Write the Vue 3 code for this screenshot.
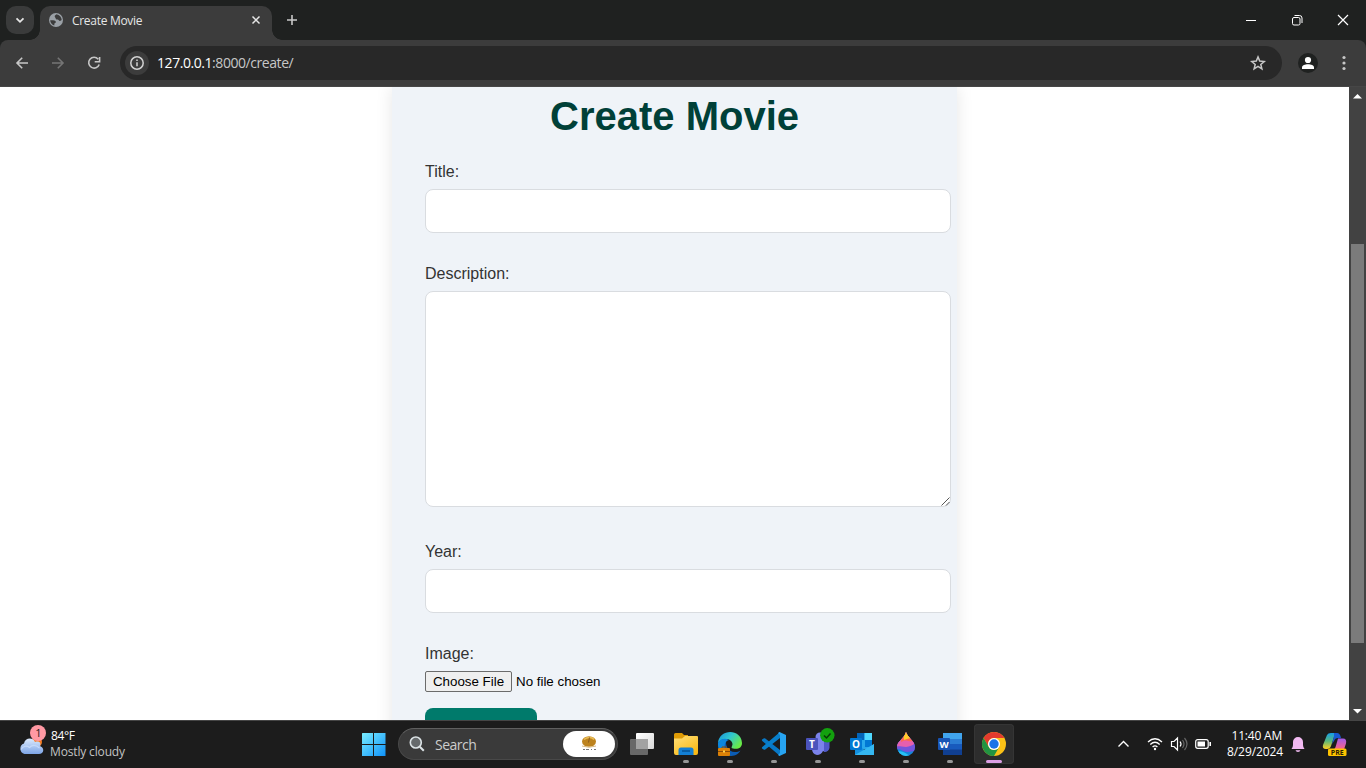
<script setup>
const apps = ['tasks', 'files', 'edge', 'code', 'teams', 'outlook', 'paint', 'word', 'chrome']
</script>

<template>
  <div class="desktop">
    <header class="tabs">
      <div class="tab-menu"><svg width="28" height="28"><path d="M10.500 12.300l3.500 3.500 3.500-3.500" fill="none" stroke="#e6e6e6" stroke-width="1.800"/></svg></div>
      <div class="tab">
        <svg class="globe" width="16" height="16" viewBox="0 0 16 16"><circle cx="8" cy="8" r="7" fill="#9aa0a6"/><path d="M2.2 8.2c2 .2 4-.2 5.2.9 1 1 .2 2-.8 2.2-.5 1 0 1.700-.4 2.100C4 12.600 2.200 10.600 2.200 8.200zM8.500 2.200c-.7 1-2 1-1.800 2.200.2 1 .9 1 1 2 .3 1.200 1.600.8 2.300 1.200.8.500 1 1.400 2 1.300.7 0 1.300-.5 1.700-.9-.1-3-2.200-5.300-5.200-5.800z" fill="#3c3c3c"/></svg>
        <span class="tab-title">Create Movie</span>
        <svg class="tab-close" width="10" height="10"><path d="M1.500 1.500l7 7M8.500 1.500l-7 7" stroke="#e6e6e6" stroke-width="1.500"/></svg>
      </div>
      <svg class="new-tab" width="12" height="12"><path d="M6 1v10M1 6h10" stroke="#c9c9c9" stroke-width="1.600"/></svg>
      <div class="window-controls">
        <svg width="46" height="40"><path d="M18 20.500h10" stroke="#fff"/></svg>
        <svg width="46" height="40" fill="none" stroke="#fff"><rect x="18.500" y="17.500" width="7.500" height="7.500" rx="1.500"/><path d="M20.500 15.500h5q2.500 0 2.500 2.500v5"/></svg>
        <svg width="46" height="40"><path d="M18 15l10 10M28 15l-10 10" stroke="#fff" stroke-width="1.200"/></svg>
      </div>
    </header>

    <div class="toolbar-back">
      <nav class="toolbar">
        <svg class="nav-icons" width="120" height="46" fill="none" stroke="#c7c7c7" stroke-width="1.600">
          <path d="M28 23H17M22.200 17.800L17 23l5.200 5.200"/>
          <path d="M52 23h11M57.800 17.800L63 23l-5.200 5.200" stroke="#757575"/>
          <path d="M98.200 19.200A5.400 5.400 0 1 0 99.200 24.500M99.600 17v4.800h-4.900"/>
        </svg>
        <div class="omnibox">
          <div class="info"><svg width="24" height="24" fill="none" stroke="#d2d2d2" stroke-width="1.500"><circle cx="12" cy="12" r="6.200"/><path d="M12 11.300v4M12 8.500v1.500"/></svg></div>
          <span class="url"><b>127.0.0.1</b>:8000/create/</span>
          <svg class="star" width="16" height="16" viewBox="0 0 16 16"><path d="M8 1.900l1.700 4.200 4.500.4-3.400 2.900 1.100 4.400L8 11.400l-3.900 2.400 1.100-4.400-3.400-2.900 4.500-.4z" fill="none" stroke="#c7c7c7" stroke-width="1.500"/></svg>
        </div>
        <svg class="profile" width="20" height="20"><circle cx="10" cy="10" r="10" fill="#1f2120"/><circle cx="10" cy="7" r="3.100" fill="#fff"/><path d="M4 16v-1.500c0-2.300 3-3.300 6-3.300s6 1 6 3.300V16z" fill="#fff"/></svg>
        <svg class="dots" width="4" height="16" fill="#c7c7c7"><circle cx="2" cy="2.500" r="1.600"/><circle cx="2" cy="8" r="1.600"/><circle cx="2" cy="13.500" r="1.600"/></svg>
      </nav>
    </div>

    <main class="viewport">
      <div class="page">
        <form class="card">
          <h1>Create Movie</h1>
          <label>Title:</label>
          <div class="field"></div>
          <label>Description:</label>
          <div class="field area"><svg width="9" height="9"><path d="M.5 8.500l8-8M5 8.500l3.500-3.500" stroke="#555" stroke-width="1"/></svg></div>
          <label>Year:</label>
          <div class="field"></div>
          <label class="image-label">Image:</label>
          <div class="file"><span class="choose">Choose File</span><span>No file chosen</span></div>
          <div class="submit"></div>
        </form>
      </div>
      <aside class="scrollbar">
        <svg width="17" height="17"><path d="M4 11.500L8.500 7l4.500 4.500z" fill="#fff"/></svg>
        <div class="thumb"></div>
        <svg width="17" height="17"><path d="M4 6l4.500 4.500L13 6z" fill="#fff"/></svg>
      </aside>
    </main>

    <footer class="taskbar">
      <div class="weather">
        <svg width="32" height="34" viewBox="0 0 32 34">
          <defs><linearGradient id="cloud" x2="0" y2="1"><stop stop-color="#dceafd"/><stop offset="1" stop-color="#7da5e6"/></linearGradient></defs>
          <circle cx="19" cy="17" r="5" fill="#f47b20"/>
          <path d="M6.500 29a5.500 5.500 0 0 1-.5-10.500C7 12.500 15 12 17 17c5-1.500 6 1.500 5 4 5 2 4 8-1 8z" fill="url(#cloud)"/>
          <path d="M3 24.500c2-4 6-4 8.500-2 3-3 7-2 10 .5" fill="none" stroke="#c5dafa" stroke-width="1.200"/>
          <circle cx="20" cy="8" r="8" fill="#ff99a4"/><text x="20.500" y="12" text-anchor="middle" font-size="11" fill="#1b1b1b">1</text>
        </svg>
        <div class="weather-text"><span class="temp">84°F</span><span class="sky">Mostly cloudy</span></div>
      </div>
      <svg class="start" width="24" height="24"><defs><linearGradient id="win" gradientUnits="userSpaceOnUse" x1="0" y1="0" x2="24" y2="24"><stop stop-color="#79edff"/><stop offset="1" stop-color="#0b8ffa"/></linearGradient></defs><path d="M.5 0H11v11H0V.5zM12 0h11.500v11H12zM0 12h11v11H0zM12 12h11.500v11H12z" fill="url(#win)"/></svg>
      <div class="search">
        <svg width="16" height="16"><circle cx="6.800" cy="6.500" r="5.500" fill="#666a6c" stroke="#dce3e6" stroke-width="1.600"/><path d="M10.800 10.800l4 4" stroke="#dce3e6" stroke-width="2"/></svg>
        <span>Search</span>
        <div class="doodle"><svg width="52" height="26"><ellipse cx="26" cy="10.500" rx="7" ry="5.300" fill="#bd831e"/><path d="M21 8.500c3-2.500 8-3 10 0" fill="none" stroke="#e9bc55" stroke-width="1.600"/><path d="M25.500 11.500l1-5" stroke="#8a5a1c"/><path d="M19 15q7 2.500 14 0" stroke="#d9ba82" fill="none"/><path d="M20 18.500h2M23 18.500h3M28 18.500h1M31 18.500h2" stroke="#777"/></svg></div>
      </div>

      <div class="apps">
        <div v-for="a in apps" :key="a" class="app" :class="{ active: a === 'chrome', running: a !== 'tasks' }">
          <svg v-if="a === 'tasks'" width="28" height="28" viewBox="0 0 28 28"><defs><linearGradient id="tv" x2="1" y2="1"><stop stop-color="#fff"/><stop offset="1" stop-color="#d8d8d8"/></linearGradient></defs><rect x="8" y="3" width="18" height="16" rx="1" fill="url(#tv)"/><rect x="2" y="9" width="18" height="16" rx="1" fill="#686868"/><path d="M8 9h12v10H8z" fill="#a2a2a2"/></svg>
          <svg v-else-if="a === 'files'" width="28" height="28" viewBox="0 0 28 28"><defs><linearGradient id="fo" x2=".7" y2="1"><stop stop-color="#ffe07a"/><stop offset="1" stop-color="#f9b916"/></linearGradient></defs><path d="M2 4.500Q2 3 3.500 3H10l2 2h4v4H2z" fill="#df9b05"/><path d="M2 8.500h8L13 6h12q1 0 1 1v16q0 2-2 2H4q-2 0-2-2z" fill="url(#fo)"/><path d="M6.500 25v-5q0-2.500 2.500-2.500h10q2.500 0 2.500 2.500v5z" fill="#137fd4"/><path d="M10 21h8" stroke="#075598" stroke-width="1.600"/></svg>
          <svg v-else-if="a === 'edge'" width="28" height="28" viewBox="0 0 28 28"><defs><linearGradient id="ed" x2="1" y2=".6"><stop stop-color="#168fd8"/><stop offset=".5" stop-color="#31c7ce"/><stop offset="1" stop-color="#69eb46"/></linearGradient></defs><path d="M2 14C2 9 7 8 11 9c-3 5 1 13 8 13 2 0 4-.5 5.500-1.500C22 25 18 26 14 26 7 26 2 21 2 14z" fill="#0b5cb5"/><path d="M2 13C3-1 25-2 26 13c0 5-4 6.500-9 5.500-2.500-.5-1-1.500-.5-4 0-3.500-3-5.500-7-5.500-4 0-6 2-7.500 4z" fill="url(#ed)"/><path d="M2 13c2-4 7-5.500 11-3-4 1-5 5-4 10l-5 1c-2-3-2-5-2-8z" fill="#0c86dc"/><rect x="2" y="18" width="12" height="8" rx="1" fill="#dc8106"/><path d="M6 18v-1h4v1M2 21.500h12" fill="none" stroke="#894b08"/><rect x="7" y="20.500" width="2" height="2" fill="#ffd34e"/></svg>
          <svg v-else-if="a === 'code'" width="28" height="28" viewBox="0 0 28 28"><path d="M2 9.500l2-1.200q.7-.3 1.300.2L20 20v6L2.300 11q-.7-.8-.3-1.500z" fill="#0878c6"/><path d="M2 18.500l2 1.200q.7.300 1.300-.2L20 8V2L2.300 17q-.7.800-.3 1.500z" fill="#087fcb"/><path d="M19.500 2L26 5v18l-6.500 3-1.500-1 2-2V5l-2-2z" fill="#27a4f1"/></svg>
          <svg v-else-if="a === 'teams'" width="28" height="28" viewBox="0 0 28 28"><circle cx="16" cy="7" r="4.500" fill="#7b83eb"/><path d="M10 11h15v7q-2 5-6 3-2 4-6 4-5-1-5-6z" fill="#7b83eb"/><path d="M20 11h5.500v7q-1 4-5.500 4z" fill="#5059c9"/><rect x="2" y="8" width="12" height="12" rx="1" fill="#4b53bc"/><text x="8" y="17.500" text-anchor="middle" font-size="10" font-weight="700" fill="#fff">T</text><circle cx="23.300" cy="5.300" r="7.200" fill="#13a10e"/><path d="M20 5.500l2.500 2.500 4-4.500" fill="none" stroke="#073a06" stroke-width="1.500"/></svg>
          <svg v-else-if="a === 'outlook'" width="28" height="28" viewBox="0 0 28 28"><path d="M9 3h15v16H9z" fill="#28a8ea"/><path d="M9 3h7v7H9z" fill="#0364b8"/><path d="M17 10h7v7h-7z" fill="#0078d4"/><path d="M17 3h7v7h-7z" fill="#50d9ff"/><path d="M7 14l10 6 9-6v11H7z" fill="#1490df"/><path d="M7 25l19-11v11z" fill="#35b8f1"/><rect x="2" y="8" width="12" height="12" rx="1" fill="#0078d4"/><text x="8" y="17.500" text-anchor="middle" font-size="10" font-weight="700" fill="#fff">O</text></svg>
          <svg v-else-if="a === 'paint'" width="28" height="28" viewBox="0 0 28 28"><defs><clipPath id="drop"><path d="M14 2c1 5 9 9 9 15a9 9 0 0 1-18 0C5 11 12 9 14 2z"/></clipPath></defs><g clip-path="url(#drop)"><path d="M0 0h28v28H0z" fill="#1686dc"/><path d="M0 0h28v22c-6-3-11 2-17-1-5-3-6-1-11-1z" fill="#7554dc"/><path d="M0 0h28v12c-5 0-8 5-14 5-5 0-9-2-14 1z" fill="#e65fae"/><path d="M10 0h15v13c-5-3-5-1-9-2-3-1-5 0-7 1z" fill="#ff674f"/><path d="M11 0h9v8q-3 0-8 2z" fill="#ffcd29"/><path d="M5 21q6 0 10 3t8 0v4H5z" fill="#27c2f5"/></g></svg>
          <svg v-else-if="a === 'word'" width="28" height="28" viewBox="0 0 28 28"><path d="M7 3h19v22H7z" fill="#185abd"/><path d="M7 3h19v6H7z" fill="#41a5ee"/><path d="M7 9h19v5H7z" fill="#2b7cd3"/><path d="M7 19.500h19V25H7z" fill="#103f91"/><rect x="2" y="8" width="12" height="12" rx="1" fill="#1855b5"/><text x="8" y="17.500" text-anchor="middle" font-size="9.500" font-weight="700" fill="#fff">W</text></svg>
          <svg v-else width="28" height="28" viewBox="0 0 28 28"><circle cx="14" cy="14" r="12" fill="#fbc116"/><path d="M3.600 8A12 12 0 0 1 24.400 8H14a6 6 0 0 0-5.200 9z" fill="#e33b2e"/><path d="M3.600 8A12 12 0 0 0 14 26l5.200-9A6 6 0 0 1 8.800 17z" fill="#229342"/><circle cx="14" cy="14" r="6" fill="#fff"/><circle cx="14" cy="14" r="4.700" fill="#1a73e8"/></svg>
        </div>
      </div>

      <div class="tray">
        <svg class="status" width="100" height="24" fill="none" stroke="#fff" stroke-width="1.400">
          <path d="M2.500 14.500L7.500 9.500l5 5"/>
          <path d="M32 10q7-6.500 14 0M34.300 12.500q4.700-4.500 9.400 0M36.600 15q2.400-2.300 4.800 0" stroke-width="1.300"/><circle cx="39" cy="17" r="1.200" fill="#fff" stroke="none"/>
          <path d="M55.500 9.500H58l3.500-3.500v12L58 14.500h-2.500zM64 9.500q2 2.500 0 5" stroke-width="1.200"/><path d="M66.500 8q3 4 0 8M68.500 6q5 6 0 12" stroke="#666" stroke-width="1.200"/>
          <rect x="79.700" y="7.700" width="12.500" height="8.600" rx="2" stroke-width="1.200"/><path d="M81.500 9.500h7.500v5h-7.500z" fill="#fff" stroke="none"/><path d="M94.200 10v4" stroke-width="1.600"/>
        </svg>
        <div class="clock"><span class="time">11:40 AM</span><span class="date">8/29/2024</span></div>
        <svg class="bell" width="14" height="17" fill="#f2baf2"><path d="M.5 13q1.500-2 1.500-4V6a5 5 0 0 1 10 0v3q0 2 1.500 4zM4.500 14.300h5q-.5 1.700-2.500 1.700t-2.500-1.700z"/></svg>
        <svg class="copilot" width="26" height="26" viewBox="0 0 26 26"><defs><linearGradient id="cl" x2="0" y2="1"><stop stop-color="#159ee9"/><stop offset=".5" stop-color="#58b77b"/><stop offset="1" stop-color="#ffd020"/></linearGradient><linearGradient id="cr" x2="0" y2="1"><stop stop-color="#a15bea"/><stop offset="1" stop-color="#ff6480"/></linearGradient></defs><path d="M5 3q1-2 4-2h6q-2 0-3 4l-3 9q-1 3-4 3H4q-4 0-3-4z" fill="url(#cl)"/><path d="M12 1h3q3 0 4 5h-3q-3 0-4 3l-2 3 2-8z" fill="#1859d3"/><path d="M16 6.500h5q4 0 3 5l-2 6H11q2 0 3-4z" fill="url(#cr)"/><rect x="6" y="16.500" width="18.500" height="7.500" rx="1.500" fill="#ffc400"/><text x="15.300" y="23" text-anchor="middle" font-size="7" font-weight="700" fill="#2b2100">PRE</text></svg>
      </div>
    </footer>
  </div>
</template>

<style>
body { margin: 0; overflow: hidden; }
</style>

<style scoped>
* { box-sizing: border-box; }
svg { display: block; flex: none; overflow: visible; }
.desktop { width: 1366px; height: 768px; display: flex; flex-direction: column; overflow: hidden; background: #fff; font-family: "Open Sans", "Noto Sans", sans-serif; }
.tabs { height: 40px; flex: none; display: flex; background: #1f2120; }
.tab-menu { width: 28px; height: 28px; margin: 6px 6px 0; border-radius: 10px; background: #3a3b3b; }
.tab { position: relative; width: 232px; height: 34px; margin-top: 6px; padding: 0 11px 6px 8px; display: flex; align-items: center; background: #3c3c3c; border-radius: 10px 10px 0 0; color: #e6e6e6; font-size: 12px; }
.tab::before, .tab::after { content: ""; position: absolute; bottom: 0; width: 10px; height: 10px; }
.tab::before { left: -10px; background: radial-gradient(circle at 0 0, transparent 9.500px, #3c3c3c 10px); }
.tab::after { right: -10px; background: radial-gradient(circle at 100% 0, transparent 9.500px, #3c3c3c 10px); }
.tab-title { margin-left: 8px; letter-spacing: -.3px; white-space: nowrap; }
.tab-close { margin-left: auto; }
.new-tab { margin: 14px 0 0 14px; }
.window-controls { margin-left: auto; display: flex; }
.toolbar-back { height: 47px; flex: none; background: #1f2120; }
.toolbar { height: 47px; display: flex; align-items: center; background: #3c3c3c; border-bottom: 1px solid #464646; border-radius: 8px 8px 0 0; }
.omnibox { width: 1162px; height: 34px; padding: 0 16px 0 5px; display: flex; align-items: center; border-radius: 17px; background: #282828; }
.info { width: 24px; height: 24px; border-radius: 50%; background: #3c3c3c; }
.url { margin: -1px 0 0 8px; font-size: 14px; letter-spacing: -.44px; color: #c7c7c7; }
.url b { font-weight: 400; color: #fff; }
.star { margin-left: auto; }
.profile { margin-left: 16px; }
.dots { margin-left: 24px; }
.viewport { height: 633px; flex: none; display: flex; overflow: hidden; }
.page { width: 1349px; display: flex; justify-content: center; overflow: hidden; }
.card { width: 565px; height: 760px; flex: none; padding: 5px 0 0 33px; background: #eff3f8; box-shadow: 0 0 16px rgba(0, 0, 0, .1); font-family: "Liberation Sans", Arial, sans-serif; }
h1 { margin: 0 33px 22px 0; height: 48px; line-height: 48px; text-align: center; font-size: 40px; color: #004038; }
label { display: block; height: 19px; line-height: 19px; margin-bottom: 8px; font-size: 16px; color: #333; }
.field { width: 526px; height: 44px; margin-bottom: 31px; border: 1px solid #d9dce0; border-radius: 8px; background: #fff; }
.area { height: 216px; margin-bottom: 35px; display: flex; align-items: flex-end; justify-content: flex-end; }
.image-label { margin-bottom: 7px; }
.file { display: flex; align-items: center; gap: 4px; height: 22px; font-size: 13.333px; color: #000; white-space: nowrap; }
.choose { width: 87px; height: 21px; border: 1px solid #6b6b6b; border-radius: 2px; background: #efefef; text-align: center; line-height: 19px; }
.submit { width: 112px; height: 44px; margin-top: 16px; border-radius: 8px; background: #007a6b; }
.scrollbar { width: 17px; display: flex; flex-direction: column; justify-content: space-between; background: #424242; }
.thumb { width: 13px; height: 399px; margin: 140px auto auto; background: #7b7b7b; }
.taskbar { height: 48px; flex: none; display: flex; background: #1c1c1c; border-top: 1px solid #454545; color: #fff; }
.weather { display: flex; width: 361px; padding: 4px 0 0 18px; }
.weather-text { display: flex; flex-direction: column; font-size: 12px; line-height: 16px; padding: 3px 0 0 1px; }
.temp { letter-spacing: -.4px; }
.sky { color: #c3c3c3; letter-spacing: -.15px; margin-left: -1px; }
.start { margin: 12px 0 0 1px; }
.search { width: 220px; height: 32px; margin: 7px 0 0 12px; padding: 0 2px 0 10px; display: flex; align-items: center; border: 1px solid #484848; border-top-color: #606060; border-radius: 16px; background: #3a3a3a; color: #ccc; font-size: 14px; }
.search span { margin-left: 10px; letter-spacing: -.5px; }
.doodle { width: 52px; height: 26px; margin-left: auto; border-radius: 13px; background: #fff; }
.apps { display: flex; gap: 4px; padding: 3px 0 0 4px; }
.app { position: relative; width: 40px; height: 40px; padding: 6px; }
.app.active { border-radius: 4px; background: #2d2d2d; box-shadow: inset 0 0 0 1px #353535; }
.app.running::after { content: ""; position: absolute; bottom: 1px; left: 17px; width: 6px; height: 3px; border-radius: 2px; background: #969696; }
.app.active::after { left: 12px; width: 16px; background: #dda0e6; }
.tray { margin-left: auto; display: flex; padding-right: 18px; }
.status { margin: 11px 11px 0 0; }
.clock { width: 56px; display: flex; flex-direction: column; align-items: flex-end; padding-top: 7px; font-size: 12px; line-height: 16px; white-space: nowrap; }
.time { letter-spacing: -.2px; margin-right: 1px; }
.date { letter-spacing: -.1px; }
.bell { margin: 15px 0 0 8px; }
.copilot { margin: 11px 0 0 17px; }
</style>
